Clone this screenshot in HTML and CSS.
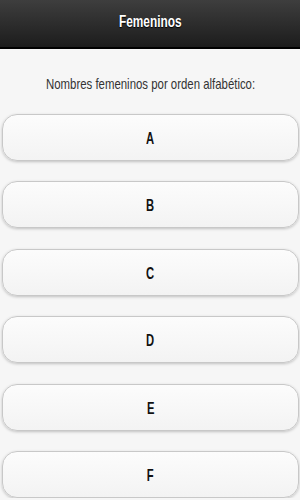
FILE: index.html
```html
<!DOCTYPE html>
<html lang="es">
<head>
    <meta charset="UTF-8">
    <meta name="viewport" content="width=device-width, initial-scale=1.0">
    <title>Femeninos</title>
    <link rel="stylesheet" href="styles.css">
</head>
<body>

<div class="header"><span class="narrow">Femeninos</span></div>
<div class="content">
    <p class="intro"><span class="narrow">Nombres femeninos por orden alfabético:</span></p>
    <a class="letter-btn" href="#"><span class="narrow">A</span></a>
    <a class="letter-btn" href="#"><span class="narrow">B</span></a>
    <a class="letter-btn" href="#"><span class="narrow">C</span></a>
    <a class="letter-btn" href="#"><span class="narrow">D</span></a>
    <a class="letter-btn" href="#"><span class="narrow">E</span></a>
    <a class="letter-btn" href="#"><span class="narrow">F</span></a>
</div>

</body>
</html>
```

FILE: styles.css
```css
body {
    margin: 0;
    background-color: #f6f6f6;
    font-family: "Liberation Sans", Arial, sans-serif;
    color: #222;
    overflow: hidden;
}

/* no condensed font installed, squeeze the regular one */
.narrow {
    display: inline-block;
    transform: scaleX(0.74);
    white-space: nowrap;
}

.header {
    height: 47px;
    line-height: 44px;
    background: linear-gradient(#3e3e3e, #1c1c1c);
    border-bottom: 2px solid #000;
    color: #fff;
    font-weight: bold;
    font-size: 16px;
    text-align: center;
    text-shadow: 0 1px 1px #000;
}

.content {
    display: flex;
    flex-direction: column;
    gap: 20.4px;
    padding: 0 1px 0 2px;
}

.intro {
    margin: 25px 0 0;
    font-size: 15px;
    line-height: 19.6px;
    text-align: center;
    color: #333;
}

.intro .narrow {
    transform: scaleX(0.76);
}

.letter-btn {
    display: block;
    box-sizing: border-box;
    height: 47px;
    line-height: 47px;
    border: 1px solid #c8c8c8;
    border-radius: 15px;
    background: linear-gradient(#fcfcfc, #f3f3f3);
    box-shadow: 0 1px 3px rgba(0, 0, 0, 0.22);
    text-align: center;
    text-decoration: none;
    color: #111;
    font-size: 17px;
    font-weight: bold;
}

.letter-btn .narrow {
    transform: scaleX(0.66);
}
```
